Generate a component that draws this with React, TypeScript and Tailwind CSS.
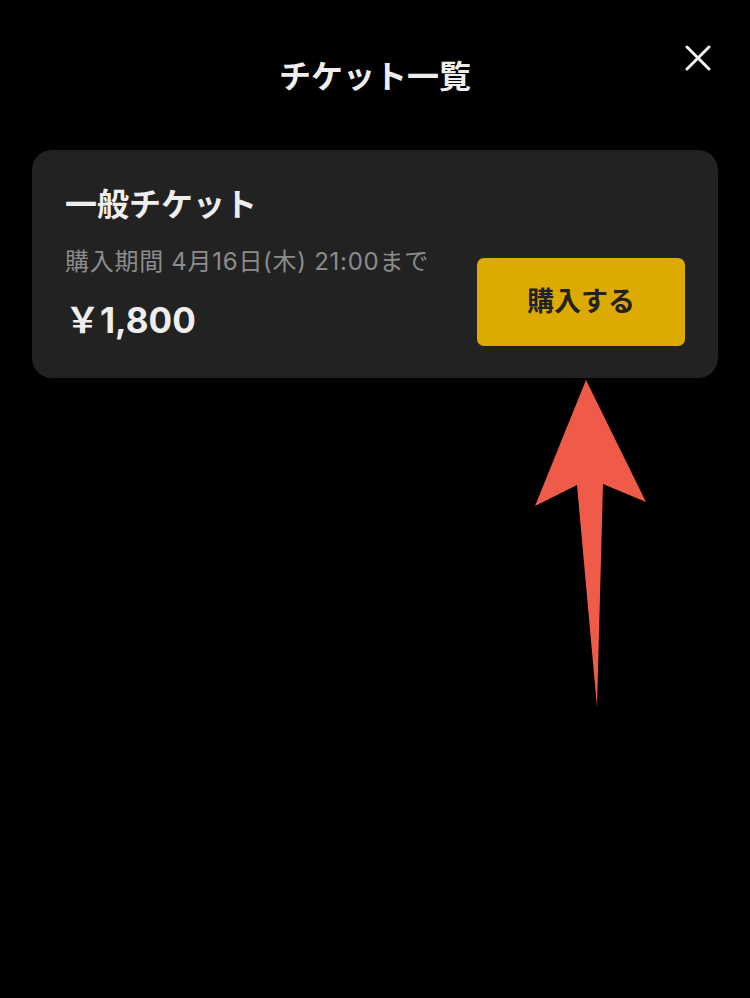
import React from 'react';

// Ticket list modal
const App: React.FC = () => {
  return (
    <div
      className="relative w-[750px] h-[998px] bg-black text-[#eeeeee] overflow-hidden"
      style={{ fontFamily: 'Inter, "Noto Sans CJK JP", "Noto Sans", sans-serif' }}
    >
      <div className="relative h-[150px]">
        <h1 className="pt-[54px] text-center text-[32px] leading-[46px] font-bold">チケット一覧</h1>
        <button className="absolute right-[38px] top-[44px] w-[28px] h-[28px] flex items-center justify-center">
          <svg width="26" height="26" viewBox="0 0 26 26" fill="none" stroke="#f2f2f2" strokeWidth="3" strokeLinecap="round">
            <line x1="2" y1="2" x2="24" y2="24" />
            <line x1="24" y1="2" x2="2" y2="24" />
          </svg>
        </button>
      </div>

      <div className="mx-[32px] w-[686px] h-[228px] rounded-[20px] bg-[#222222] px-[33px] pt-[32px] flex justify-between">
        <div>
          <h2 className="text-[32px] leading-[46px] font-bold text-[#eeeeee]">一般チケット</h2>
          <p className="mt-[17px] text-[24px] leading-[33px] tracking-[0.03em] text-[#8c8c8c]">購入期間 4月16日(木) 21:00まで</p>
          <p className="mt-[19px] text-[35px] leading-[46px] font-bold text-[#eeeeee]">￥1,800</p>
        </div>
        <button className="mt-[76px] w-[208px] h-[88px] rounded-[7px] bg-[#dcaa00] text-[27px] font-bold text-[#222222]">
          購入する
        </button>
      </div>

      <svg className="absolute left-0 top-0" width="750" height="998" viewBox="0 0 750 998">
        <polygon
          points="586,380 646,502 603,484 597,707 577,485 535,506"
          fill="#ef5b48"
        />
      </svg>
    </div>
  );
};

export default App;
